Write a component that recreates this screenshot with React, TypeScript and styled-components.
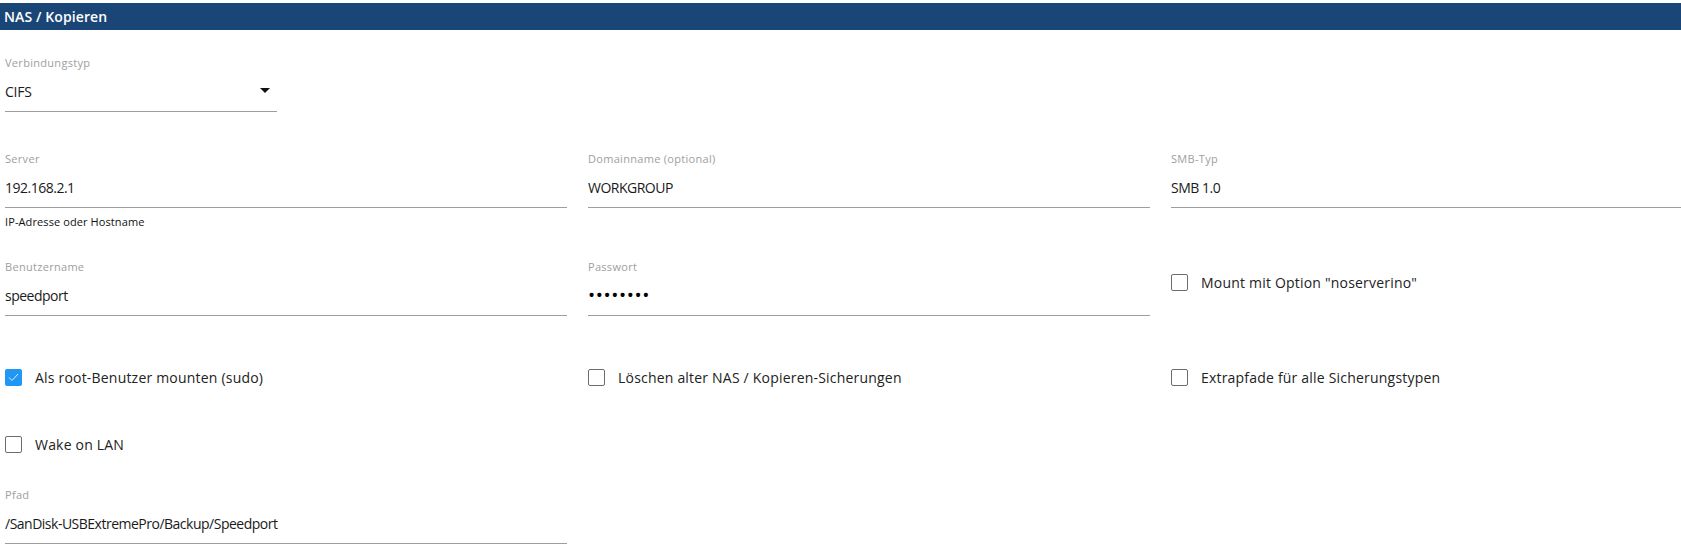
import React from 'react'
import styled, { createGlobalStyle } from 'styled-components'

const GlobalStyle = createGlobalStyle`
body {
  margin: 0;
  background: #fff;
  font-family: "Open Sans", "Noto Sans", Arial, sans-serif;
  color: #222;
  overflow: hidden;
}
`

const Page = styled.div`
padding-top: 3px;
width: 1681px;
overflow: hidden;
`

const Header = styled.div`
height: 27px;
background-color: #1a4577;
color: #fff;
font-size: 14px;
font-weight: 600;
letter-spacing: 0.1px;
line-height: 27px;
padding-left: 4px;
`

const Content = styled.div`
padding-left: 5px;
`

const Row = styled.div<{ $top: number }>`
display: grid;
grid-template-columns: repeat(3, 562px);
column-gap: 21px;
margin-top: ${p => p.$top}px;
align-items: start;
`

const Field = styled.div<{ $width?: number }>`
display: flex;
flex-direction: column;
width: ${p => (p.$width ? p.$width + 'px' : 'auto')};
`

const Label = styled.label`
font-size: 11px;
letter-spacing: 0.3px;
line-height: 16px;
color: #9e9e9e;
`

const Input = styled.input`
height: 40px;
padding: 0;
margin: 0;
border: none;
border-bottom: 1px solid #9e9e9e;
outline: none;
background: transparent;
font-family: inherit;
font-size: 14px;
letter-spacing: -0.5px;
color: #1a1a1a;
width: 100%;
&[type='password'] {
  font-size: 19px;
  letter-spacing: 0.6px;
  color: #000;
}
`

const Select = styled.div`
height: 40px;
display: flex;
align-items: center;
justify-content: space-between;
border-bottom: 1px solid #9e9e9e;
font-size: 14px;
letter-spacing: -0.2px;
color: #1a1a1a;
padding-right: 7px;
cursor: pointer;
`

const Caret = styled.span`
width: 0;
height: 0;
border-left: 5px solid transparent;
border-right: 5px solid transparent;
border-top: 5px solid #111;
margin-top: -2px;
`

const Helper = styled.div`
font-size: 11px;
letter-spacing: 0.1px;
line-height: 16px;
margin-top: 6px;
color: #111;
`

const Check = styled.label<{ $pad?: number }>`
display: flex;
align-items: center;
height: 24px;
padding-top: ${p => p.$pad || 0}px;
font-size: 14px;
letter-spacing: 0.2px;
color: #222;
cursor: pointer;
`

const Box = styled.span<{ $on?: boolean }>`
box-sizing: border-box;
width: 17px;
height: 17px;
border-radius: 2px;
border: ${p => (p.$on ? 'none' : '1px solid #6d6d6d')};
background: ${p => (p.$on ? '#2196f3' : '#fff')};
margin-right: 13px;
display: flex;
align-items: center;
justify-content: center;
flex-shrink: 0;
`

const Checkbox: React.FC<{ on?: boolean; pad?: number; children: React.ReactNode }> = ({ on, pad, children }) => (
    <Check $pad={pad}>
        <Box $on={on}>
            {on && (
                <svg width="11" height="9" viewBox="0 0 11 9">
                    <path d="M1 4.5 L4 7.5 L10 1" fill="none" stroke="#dceeff" strokeWidth="1" />
                </svg>
            )}
        </Box>
        {children}
    </Check>
)

const App: React.FC = () => {
    return (
        <Page>
            <GlobalStyle />
            <Header>NAS / Kopieren</Header>
            <Content>
                <Row $top={25}>
                    <Field $width={272}>
                        <Label>Verbindungstyp</Label>
                        <Select>CIFS <Caret /></Select>
                    </Field>
                </Row>

                <Row $top={39}>
                    <Field>
                        <Label>Server</Label>
                        <Input type="text" defaultValue="192.168.2.1" />
                        <Helper>IP-Adresse oder Hostname</Helper>
                    </Field>
                    <Field>
                        <Label>Domainname (optional)</Label>
                        <Input type="text" defaultValue="WORKGROUP" />
                    </Field>
                    <Field>
                        <Label>SMB-Typ</Label>
                        <Input type="text" defaultValue="SMB 1.0" />
                    </Field>
                </Row>

                <Row $top={29}>
                    <Field>
                        <Label>Benutzername</Label>
                        <Input type="text" defaultValue="speedport" />
                    </Field>
                    <Field>
                        <Label>Passwort</Label>
                        <Input type="password" defaultValue="12345678" />
                    </Field>
                    <Checkbox pad={11}>Mount mit Option "noserverino"</Checkbox>
                </Row>

                <Row $top={49}>
                    <Checkbox on>Als root-Benutzer mounten (sudo)</Checkbox>
                    <Checkbox>Löschen alter NAS / Kopieren-Sicherungen</Checkbox>
                    <Checkbox>Extrapfade für alle Sicherungstypen</Checkbox>
                </Row>

                <Row $top={43}>
                    <Checkbox>Wake on LAN</Checkbox>
                </Row>

                <Row $top={31}>
                    <Field>
                        <Label>Pfad</Label>
                        <Input type="text" defaultValue="/SanDisk-USBExtremePro/Backup/Speedport" />
                    </Field>
                </Row>
            </Content>
        </Page>
    )
}
export default App
